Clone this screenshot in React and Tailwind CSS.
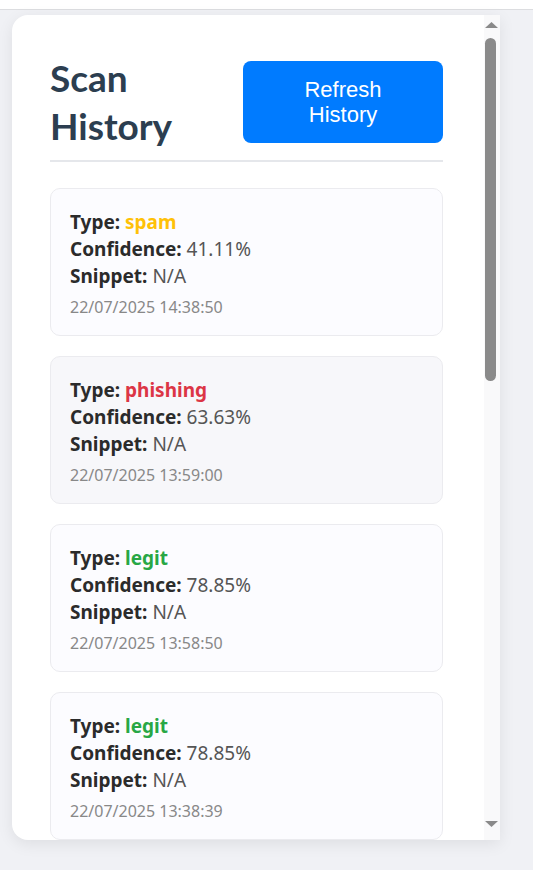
import React from 'react';

const history = [
  { type: 'spam', confidence: '41.11%', snippet: 'N/A', date: '22/07/2025 14:38:50' },
  { type: 'phishing', confidence: '63.63%', snippet: 'N/A', date: '22/07/2025 13:59:00' },
  { type: 'legit', confidence: '78.85%', snippet: 'N/A', date: '22/07/2025 13:58:50' },
  { type: 'legit', confidence: '78.85%', snippet: 'N/A', date: '22/07/2025 13:38:39' },
];

const typeColor = {
  spam: 'text-[#ffc107]',
  phishing: 'text-[#dc3545]',
  legit: 'text-[#28a745]',
};

const HistoryCard = ({ item, hovered }) => (
  <div
    className={`border border-[#ebebef] rounded-[10px] pt-[20px] pb-[18px] px-[19px] ${
      hovered ? 'bg-[#f7f7fa]' : 'bg-[#fcfcff]'
    }`}
  >
    <p className="text-[19px] leading-[27px] text-[#555]">
      <span className="font-bold text-[#2b2b2b]">Type:</span>{' '}
      <span className={`font-bold ${typeColor[item.type]}`}>{item.type}</span>
    </p>
    <p className="text-[19px] leading-[27px] text-[#555]">
      <span className="font-bold text-[#2b2b2b]">Confidence:</span> {item.confidence}
    </p>
    <p className="text-[19px] leading-[27px] text-[#555]">
      <span className="font-bold text-[#2b2b2b]">Snippet:</span> {item.snippet}
    </p>
    <p className="mt-[7px] text-[16px] leading-[20px] text-[#888]">{item.date}</p>
  </div>
);

// drawn scrollbar (headless browser hides the native one)
const Scrollbar = () => (
  <div className="absolute top-0 right-0 bottom-0 w-[16px] bg-[#f9f9fa]">
    <svg className="absolute top-[7px] left-[1px]" width="13" height="7" viewBox="0 0 13 7">
      <polygon points="6.5,0 13,6 0,6" fill="#8a8a8a" />
    </svg>
    <div className="absolute top-[23px] left-[1px] w-[11px] h-[343px] rounded-full bg-[#8a8a8a]" />
    <svg className="absolute bottom-[12px] left-[1px]" width="13" height="7" viewBox="0 0 13 7">
      <polygon points="0,0 13,0 6.5,6" fill="#8a8a8a" />
    </svg>
  </div>
);

export default function App() {
  return (
    <div className="min-h-[870px] bg-[#f0f1f5] font-['Noto_Sans',sans-serif]">
      <div className="h-[10px] bg-white border-b border-[#dcdde0]" />
      <div className="pt-[5px] pl-[12px]">
        <div className="relative w-[488px] h-[825px] bg-white rounded-l-[16px] shadow-[0_4px_16px_rgba(0,0,0,0.08)] overflow-hidden">
          <div className="pt-[39px] pl-[38px] w-[431px]">
            <div className="flex items-center justify-between pb-[10px] border-b-2 border-[#e5e7eb]">
              <h2 className="text-[37px] leading-[48px] font-bold text-[#2c3e50] font-['Lato',sans-serif]">
                Scan
                <br />
                History
              </h2>
              <button className="w-[200px] h-[82px] rounded-[8px] bg-[#007bff] text-white text-[22px] leading-[25px] font-['Liberation_Sans',Arial,sans-serif]">
                Refresh
                <br />
                History
              </button>
            </div>
            <div className="mt-[26px] flex flex-col gap-[20px]">
              {history.map((item, i) => (
                <HistoryCard key={i} item={item} hovered={i === 1} />
              ))}
            </div>
          </div>
          <Scrollbar />
        </div>
      </div>
    </div>
  );
}
